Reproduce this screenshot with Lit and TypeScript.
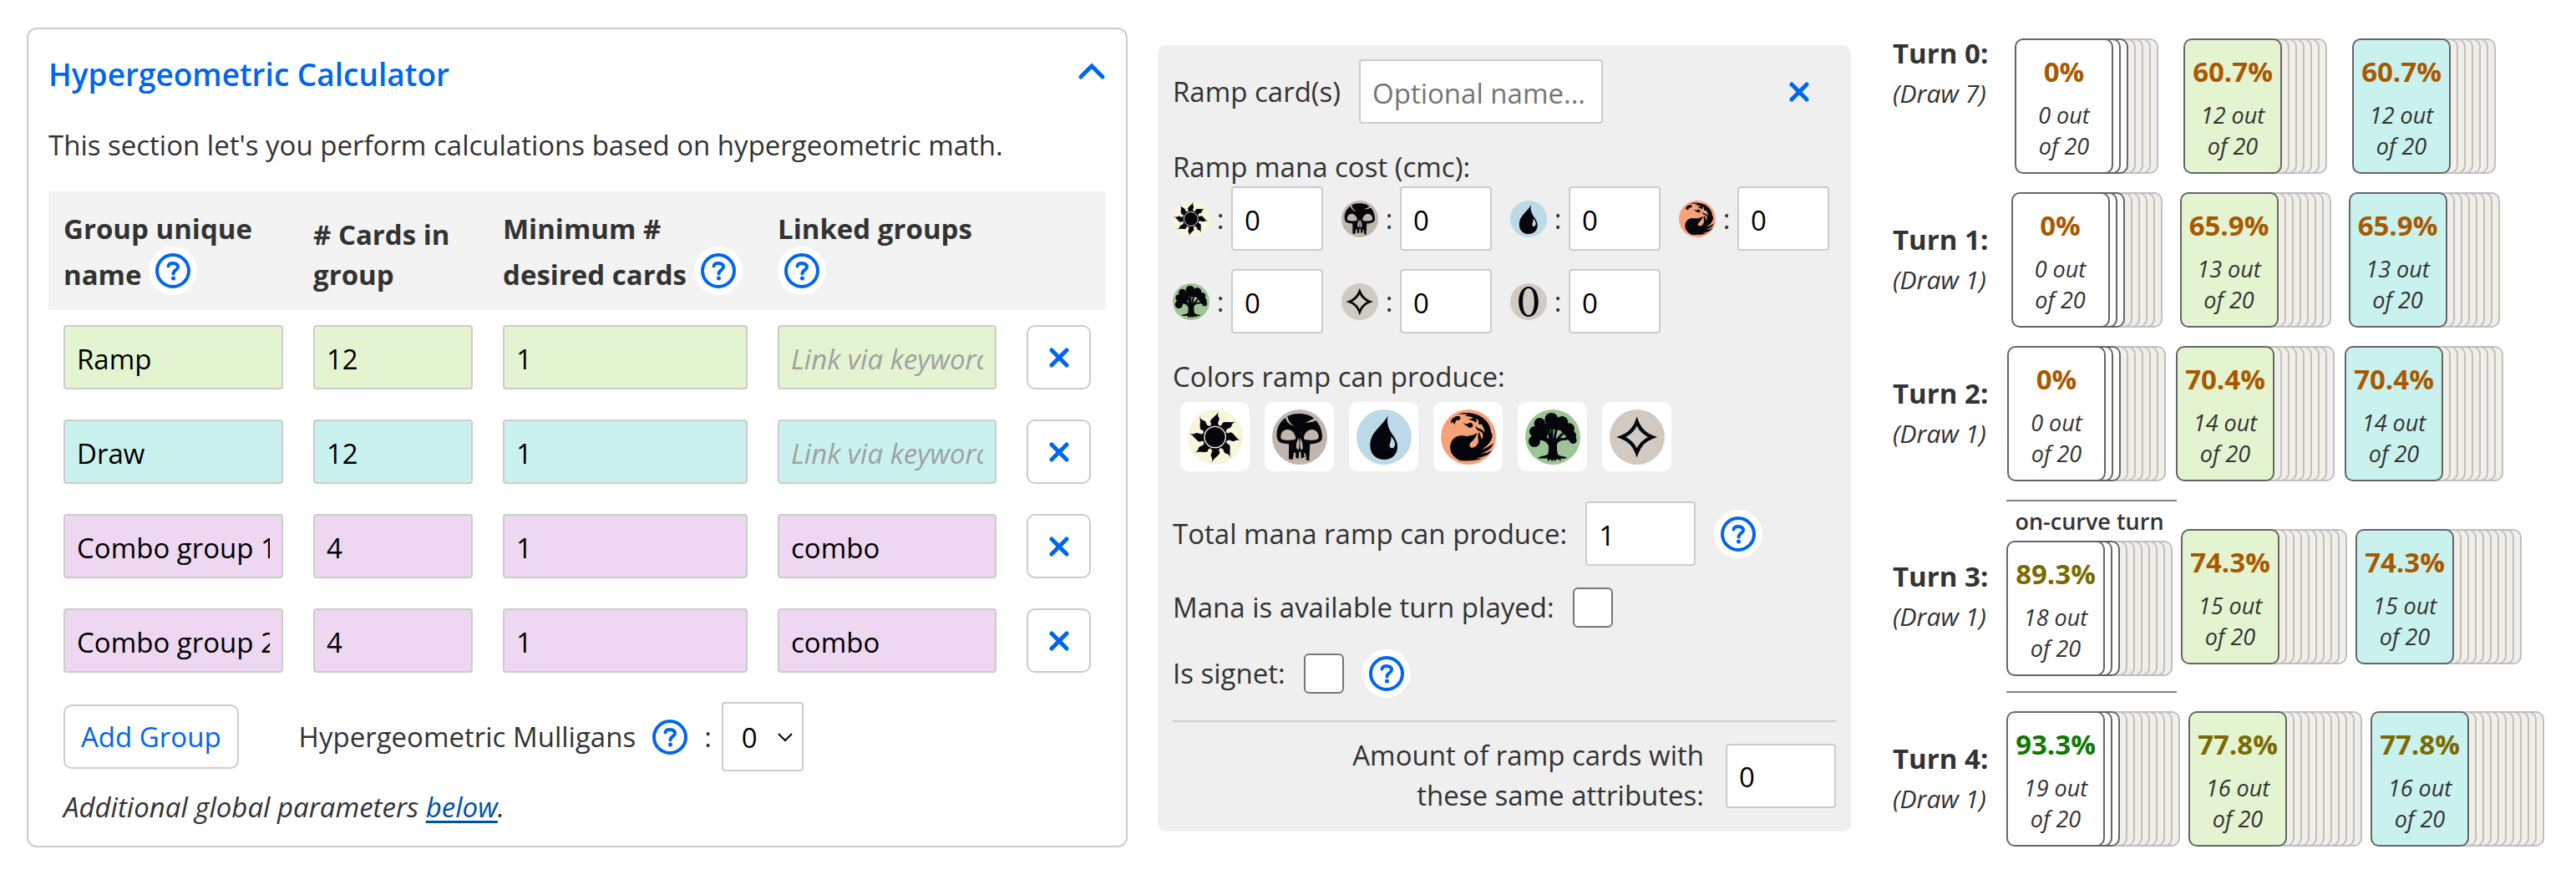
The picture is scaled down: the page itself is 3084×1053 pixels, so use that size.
import { LitElement, css, html, svg } from "lit";
import { customElement, property } from "lit/decorators.js";
import { classMap } from "lit/directives/class-map.js";

const base = css`
  * {
    box-sizing: border-box;
  }
  :host {
    display: block;
    font-family: "Open Sans", "Noto Sans", sans-serif;
    font-size: 33px;
    line-height: 48px;
    color: #333;
  }
  p,
  h2 {
    margin: 0;
  }
  svg {
    display: block;
  }
  button {
    font: inherit;
    color: #0066ee;
    cursor: pointer;
  }
  .field {
    width: 100%;
    height: 77px;
    padding: 3px 14px 0;
    font: inherit;
    color: #000;
    background: #fff;
    border: 2px solid #ccc;
    border-radius: 4px;
    appearance: textfield;
  }
  .field::-webkit-inner-spin-button {
    display: none;
  }
  .cross {
    width: 24px;
    height: 24px;
  }
`;

const cross = html`<svg class="cross" viewBox="0 0 24 24" aria-hidden="true">
  <path d="M3 3 21 21M21 3 3 21" fill="none" stroke="#0066ee" stroke-width="5" stroke-linecap="round" />
</svg>`;

type Mana = "white" | "black" | "blue" | "red" | "green" | "colorless" | "generic";

const manaTint: Record<Mana, string> = {
  white: "#f7f5da",
  black: "#c1b6ae",
  blue: "#bcd9e7",
  red: "#f7a179",
  green: "#9dc496",
  colorless: "#d1cac3",
  generic: "#d1cac3",
};

const ray = "M-18-38C-14-44-12-48-17-54C-18-66 6-74 14-95C9-84 9-76 14-70C18-60 8-54 11-47L17-38Z";

const manaArt: Record<Mana, unknown> = {
  white: svg`
    <g transform="translate(98 99)">
      ${[0, 45, 90, 135, 180, 225, 270, 315].map((a) => svg`<path transform="rotate(${a})" d=${ray} />`)}
      <circle r="42" />
      <circle r="38" fill="none" stroke="#f7f5da" stroke-width="4" />
    </g>`,
  black: svg`
    <path d="M96 15C122 15 140 22 150 32C168 48 176 66 178 84C182 100 180 112 170 116C160 122 146 124 136 124L133 183L123 182L120 158L114 156L116 170L104 176L103 152L97 152L95 176L85 174L84 154L78 156L74 180L60 178V124C46 122 34 122 26 116C16 108 16 96 17 80C20 60 30 42 48 30C60 20 76 15 96 15Z" />
    <g fill="#c1b6ae">
      <path d="M31 96C32 80 44 72 56 72C70 72 80 84 84 98C86 106 82 108 76 109C62 111 46 110 36 107C31 105 30 101 31 96Z" />
      <path d="M167 96C166 80 154 72 142 72C128 72 118 84 114 98C112 106 116 108 122 109C136 111 152 110 162 107C167 105 168 101 167 96Z" />
      <path d="M95 102C88 114 85 128 87 139L94 145L97 137L98 118ZM101 102C108 114 111 128 110 141L103 145L101 137L100 118Z" />
      <path d="M48 26C50 44 62 54 80 60C68 52 58 42 56 26Z" />
      <path d="M158 30C146 34 134 40 120 47C134 46 148 44 160 38Z" />
    </g>`,
  blue: svg`
    <path d="M113 22C108 42 112 62 124 82C136 100 147 112 147 134C147 162 126 180 98 180C70 180 49 160 49 130C49 100 62 84 78 66C92 50 104 40 113 22Z" />
    <path fill="#bcd9e7" d="M124 97C132 106 138 114 138 124C138 133 134 139 128 139C121 139 118 133 119 127C121 118 126 110 124 97Z" />`,
  red: svg`
    <path d="M60 17C76 10 106 10 126 17C150 24 168 42 176 62C180 74 178 80 184 88C188 106 172 128 148 143C166 138 178 130 188 121C184 140 166 152 142 158C158 158 172 154 184 146C172 164 152 172 128 174C136 176 142 176 148 175C132 184 92 186 68 183C46 172 33 156 33 136C34 112 50 94 74 94C84 94 92 98 104 94C116 92 124 88 130 83C128 98 118 108 108 118C100 126 102 138 114 137C128 134 138 122 134 104C132 96 134 86 138 80C140 90 146 98 147 108C154 96 152 84 142 78C132 76 124 70 125 58C128 64 132 68 140 70C148 72 154 76 156 84C160 72 150 62 146 52C142 56 136 54 134 48C140 42 132 34 124 34C130 40 130 46 124 46C116 38 104 40 100 34C106 34 112 34 116 30C104 24 92 26 86 22C94 20 98 18 104 19C88 15 74 17 60 17Z" />
    <path d="M35 50C36 34 46 26 58 24C66 22 72 26 70 34C68 40 58 38 54 40C52 46 50 50 49 54C46 50 44 48 44 44C40 46 38 48 35 50Z" />
    <path d="M80 47C88 52 96 54 102 48C110 46 116 52 115 60C110 68 98 66 96 60C90 58 84 54 80 47Z" />`,
  green: svg`
    <circle cx="94" cy="36" r="24" /><circle cx="52" cy="50" r="20" /><circle cx="132" cy="46" r="22" />
    <circle cx="158" cy="68" r="19" /><circle cx="34" cy="79" r="19" /><circle cx="33" cy="114" r="21" />
    <circle cx="164" cy="94" r="19" /><circle cx="172" cy="110" r="13" /><circle cx="60" cy="84" r="22" />
    <path d="M44 50H146L164 90L140 92L126 74H114L96 70L78 74L64 94L40 100Z" />
    <path d="M96 60V110M84 70 90 110M112 70 104 112M60 88 88 116M134 86 108 116M48 106Q76 102 88 128M150 106Q118 102 108 126" fill="none" stroke="#04060c" stroke-width="9" />
    <path d="M82 104H116C114 128 112 148 118 162C126 168 140 168 150 172C144 178 134 176 126 176L130 184L114 178L106 186L102 178L96 188L92 178L82 186L80 176C68 174 56 178 46 174C56 166 74 168 82 160C86 140 84 122 82 104Z" />`,
  colorless: svg`
    <path d="M98 44Q113 84 153 99Q113 114 98 154Q83 114 43 99Q83 84 98 44Z" fill="none" stroke="#04060c" stroke-width="13" stroke-miterlimit="6" />`,
  generic: svg`
    <path fill-rule="evenodd" d="M99 18C132 18 152 54 152 99S132 180 99 180S46 144 46 99S66 18 99 18ZM99 27C78 27 68 60 68 99S78 171 99 171S130 138 130 99S120 27 99 27Z" />`,
};

@customElement("mana-symbol")
export class ManaSymbol extends LitElement {
  static styles = css`
    :host {
      display: block;
      flex: none;
    }
    .art {
      display: block;
      width: 100%;
      height: 100%;
    }
  `;

  @property() kind: Mana = "white";

  render() {
    return html`<svg class="art" viewBox="0 0 198 198" fill="#04060c" role="img" aria-label=${this.kind}>
      <circle cx="99" cy="99" r="99" fill=${manaTint[this.kind]} />
      ${manaArt[this.kind]}
    </svg>`;
  }
}

@customElement("help-button")
export class HelpButton extends LitElement {
  static styles = css`
    :host {
      display: inline-block;
      vertical-align: -12px;
      flex: none;
      height: 58px;
    }
    .help {
      display: block;
      width: 58px;
      height: 58px;
      padding: 8px;
      border: 0;
      border-radius: 50%;
      background: #fff;
      cursor: pointer;
    }
    .mark {
      display: block;
      width: 42px;
      height: 42px;
    }
  `;

  render() {
    return html`<button class="help" type="button" aria-label="Help">
      <svg class="mark" viewBox="0 0 42 42" fill="none" stroke="#0066ee" aria-hidden="true">
        <circle cx="21" cy="21" r="19" stroke-width="4" />
        <path d="M15.500 15.500C16 12.500 18.500 12 21 12C24.500 12 27 13.500 27 16.500C27 20 21.500 20.500 21.500 24.500" stroke-width="4" stroke-linecap="round" />
        <circle cx="21.500" cy="30" r="2.500" fill="#0066ee" stroke="none" />
      </svg>
    </button>`;
  }
}

interface Group {
  name: string;
  cards: number;
  minimum: number;
  link: string;
  tone: "ramp" | "draw" | "combo";
}

const groups: Group[] = [
  { name: "Ramp", cards: 12, minimum: 1, link: "", tone: "ramp" },
  { name: "Draw", cards: 12, minimum: 1, link: "", tone: "draw" },
  { name: "Combo group 1", cards: 4, minimum: 1, link: "combo", tone: "combo" },
  { name: "Combo group 2", cards: 4, minimum: 1, link: "combo", tone: "combo" },
];

@customElement("group-calculator")
export class GroupCalculator extends LitElement {
  static styles = [
    base,
    css`
      .panel {
        padding: 27px 24px 22px;
        border: 2px solid #ccc;
        border-radius: 12px;
      }
      .head {
        display: flex;
        align-items: center;
        justify-content: space-between;
      }
      .title {
        font-size: 37px;
        line-height: 54px;
        font-weight: 600;
        color: #0066ee;
      }
      .toggle {
        padding: 0;
        border: 0;
        background: none;
      }
      .chevron {
        width: 34px;
        height: 34px;
      }
      .intro {
        margin: 34px 0 31px;
      }
      .groups {
        width: 100%;
        table-layout: fixed;
        border-collapse: collapse;
      }
      .col-name {
        width: 299px;
      }
      .col-cards {
        width: 227px;
      }
      .col-min {
        width: 329px;
      }
      .col-link {
        width: 298px;
      }
      .col-remove {
        width: 113px;
      }
      .groups th,
      .groups td {
        padding: 18px;
        text-align: left;
        vertical-align: bottom;
      }
      .groups th {
        padding-top: 21px;
        font-weight: 700;
        background: #f3f3f3;
      }
      .groups help-button {
        margin-top: -3px;
      }
      .groups .field,
      .groups .remove {
        display: block;
      }
      .ramp {
        background: #e5f4d0;
      }
      .draw {
        background: #c9f2ee;
      }
      .combo {
        background: #eed7f0;
      }
      .link::placeholder {
        font-style: italic;
        color: #a0a0a0;
      }
      .remove,
      .add {
        height: 77px;
        border: 2px solid #ccc;
        border-radius: 10px;
        background: #fff;
      }
      .remove {
        width: 100%;
        padding: 0;
      }
      .remove .cross {
        margin: 0 auto;
      }
      .add {
        padding: 0 19px;
      }
      .options {
        display: flex;
        align-items: center;
        margin: 17px 18px 19px;
        gap: 72px;
      }
      .mulligans {
        display: flex;
        align-items: center;
        gap: 12px;
      }
      .picker {
        display: grid;
        align-items: center;
      }
      .select {
        grid-area: 1 / 1;
        width: 98px;
        height: 83px;
        padding: 2px 22px 0;
        font: inherit;
        color: #000;
        background: #fff;
        border: 2px solid #ccc;
        border-radius: 4px;
        appearance: none;
      }
      .arrow {
        grid-area: 1 / 1;
        justify-self: end;
        width: 20px;
        height: 14px;
        margin-right: 12px;
        pointer-events: none;
      }
      .note {
        margin: 0 18px;
        font-style: italic;
      }
      .note a {
        color: #0050a8;
        text-underline-offset: 4px;
      }
    `,
  ];

  render() {
    return html`<section class="panel">
      <header class="head">
        <h2 class="title">Hypergeometric Calculator</h2>
        <button class="toggle" type="button" aria-label="Collapse section">
          <svg class="chevron" viewBox="0 0 34 34" aria-hidden="true">
            <path d="M4 20 17 7 30 20" fill="none" stroke="#0066ee" stroke-width="5" stroke-linecap="round" />
          </svg>
        </button>
      </header>
      <p class="intro">This section let's you perform calculations based on hypergeometric math.</p>
      <table class="groups">
        <colgroup>
          <col class="col-name" />
          <col class="col-cards" />
          <col class="col-min" />
          <col class="col-link" />
          <col class="col-remove" />
        </colgroup>
        <thead>
          <tr>
            <th scope="col">Group unique name <help-button></help-button></th>
            <th scope="col"># Cards in group</th>
            <th scope="col">Minimum # desired cards <help-button></help-button></th>
            <th scope="col">Linked groups <help-button></help-button></th>
            <th></th>
          </tr>
        </thead>
        <tbody>
          ${groups.map(
            (g) => html`<tr>
              <td><input class="field ${g.tone}" type="text" aria-label="Group name" .value=${g.name} /></td>
              <td><input class="field ${g.tone}" type="number" aria-label="Cards in group" .value=${String(g.cards)} /></td>
              <td><input class="field ${g.tone}" type="number" aria-label="Minimum desired cards" .value=${String(g.minimum)} /></td>
              <td>
                <input class="field link ${g.tone}" type="text" aria-label="Linked groups" placeholder="Link via keyword" .value=${g.link} />
              </td>
              <td><button class="remove" type="button" aria-label="Remove group">${cross}</button></td>
            </tr>`,
          )}
        </tbody>
      </table>
      <div class="options">
        <button class="add" type="button">Add Group</button>
        <div class="mulligans">
          <label for="mulligans">Hypergeometric Mulligans</label>
          <help-button></help-button>
          <span>:</span>
          <div class="picker">
            <select class="select" id="mulligans">
              <option>0</option>
              <option>1</option>
              <option>2</option>
            </select>
            <svg class="arrow" viewBox="0 0 20 14" aria-hidden="true">
              <path d="M2 3 10 11 18 3" fill="none" stroke="#000" stroke-width="2" />
            </svg>
          </div>
        </div>
      </div>
      <p class="note">Additional global parameters <a href="#below">below</a>.</p>
    </section>`;
  }
}

const costKinds: Mana[] = ["white", "black", "blue", "red", "green", "colorless", "generic"];
const produceKinds: Mana[] = ["white", "black", "blue", "red", "green", "colorless"];

@customElement("ramp-editor")
export class RampEditor extends LitElement {
  static styles = [
    base,
    css`
      .panel {
        padding: 17px 18px 19px;
        line-height: 46px;
        background: #efefef;
        border-radius: 10px;
      }
      .line {
        display: flex;
        align-items: center;
        gap: 22px;
      }
      .name {
        width: 292px;
      }
      .name::placeholder {
        color: #757575;
      }
      .close {
        display: grid;
        place-items: center;
        width: 88px;
        height: 77px;
        margin-left: auto;
        border: 0;
        background: none;
      }
      .heading {
        margin-top: 29px;
      }
      .costs {
        display: grid;
        grid-template-columns: repeat(auto-fill, 180px);
        gap: 22px;
      }
      .cost {
        display: grid;
        grid-template-columns: 44px 26px 110px;
        align-items: center;
        text-align: center;
      }
      .cost mana-symbol {
        width: 44px;
        height: 44px;
      }
      .colors {
        display: flex;
        gap: 18px;
        margin: 7px 9px 36px;
      }
      .tile {
        display: grid;
        place-items: center;
        width: 83px;
        height: 83px;
        padding: 0;
        border: 0;
        border-radius: 10px;
        background: #fff;
      }
      .tile mana-symbol {
        width: 66px;
        height: 66px;
      }
      .amount {
        width: 132px;
        flex: none;
      }
      .available {
        margin: 26px 0;
      }
      .box {
        width: 48px;
        height: 48px;
        margin: 0;
        border: 2px solid #767676;
        border-radius: 6px;
        background: #fff;
        appearance: none;
      }
      .copies {
        justify-content: flex-end;
        gap: 26px;
        margin-top: 27px;
        padding-top: 16px;
        border-top: 2px solid #ccc;
      }
      .copies-label {
        max-width: 460px;
        line-height: 48px;
        text-align: right;
      }
    `,
  ];

  render() {
    return html`<section class="panel">
      <div class="line">
        <label for="name">Ramp card(s)</label>
        <input class="field name" id="name" type="text" placeholder="Optional name..." />
        <button class="close" type="button" aria-label="Remove ramp card">${cross}</button>
      </div>
      <p class="heading">Ramp mana cost (cmc):</p>
      <div class="costs">
        ${costKinds.map(
          (k) => html`<label class="cost">
            <mana-symbol .kind=${k}></mana-symbol><span>:</span>
            <input class="field" type="number" aria-label="${k} mana" value="0" />
          </label>`,
        )}
      </div>
      <p class="heading">Colors ramp can produce:</p>
      <div class="colors">
        ${produceKinds.map(
          (k) => html`<button class="tile" type="button" aria-pressed="false" aria-label=${k}>
            <mana-symbol .kind=${k}></mana-symbol>
          </button>`,
        )}
      </div>
      <div class="line">
        <label for="total">Total mana ramp can produce:</label>
        <input class="field amount" id="total" type="number" value="1" />
        <help-button></help-button>
      </div>
      <div class="line available">
        <label for="available">Mana is available turn played:</label>
        <input class="box" id="available" type="checkbox" />
      </div>
      <div class="line">
        <label for="signet">Is signet:</label>
        <input class="box" id="signet" type="checkbox" />
        <help-button></help-button>
      </div>
      <div class="line copies">
        <label class="copies-label" for="copies">Amount of ramp cards with these same attributes:</label>
        <input class="field amount" id="copies" type="number" value="0" />
      </div>
    </section>`;
  }
}

type Rating = "low" | "fair" | "good";

interface Stack {
  chance: string;
  hits: string;
  rating: Rating;
  tone: "combo" | "ramp" | "draw";
  needed: number;
  onCurve?: boolean;
}

interface Turn {
  number: number;
  drawn: number;
  stacks: Stack[];
}

type Odds = [chance: string, hits: number, rating: Rating];

const turn = (number: number, combo: Odds, other: Odds): Turn => {
  const stack = ([chance, hits, rating]: Odds) => ({ chance, rating, hits: `${hits} out of 20` });
  return {
    number,
    drawn: number === 0 ? 7 : 1,
    stacks: [
      { ...stack(combo), tone: "combo", needed: 3, onCurve: number === 3 },
      { ...stack(other), tone: "ramp", needed: 1 },
      { ...stack(other), tone: "draw", needed: 1 },
    ],
  };
};

const turns: Turn[] = [
  turn(0, ["0%", 0, "low"], ["60.7%", 12, "low"]),
  turn(1, ["0%", 0, "low"], ["65.9%", 13, "low"]),
  turn(2, ["0%", 0, "low"], ["70.4%", 14, "low"]),
  turn(3, ["89.3%", 18, "fair"], ["74.3%", 15, "low"]),
  turn(4, ["93.3%", 19, "good"], ["77.8%", 16, "fair"]),
];

@customElement("turn-odds")
export class TurnOdds extends LitElement {
  static styles = [
    base,
    css`
      .turns {
        display: flex;
        flex-direction: column;
        gap: 22px;
        padding-left: 14px;
      }
      .turn {
        display: flex;
        align-items: center;
      }
      .opening {
        min-height: 168px;
        align-items: flex-start;
      }
      .opening .cell {
        align-self: flex-end;
      }
      .label {
        flex: none;
        width: 131px;
        white-space: nowrap;
      }
      .number {
        font-weight: 700;
      }
      .drawn {
        font-size: 30px;
        font-style: italic;
      }
      .cell {
        display: flex;
        justify-content: center;
        min-width: 202px;
        padding: 0 5px;
      }
      .curve-cell {
        padding-right: 0;
      }
      .curve {
        padding: 5px 5px 18px 0;
        border: 2px solid #808080;
        border-width: 2px 0;
      }
      .curve-label {
        margin-bottom: 5px;
        font-size: 27px;
        line-height: 37px;
        font-weight: 600;
        text-align: center;
      }
      .stack {
        display: flex;
        isolation: isolate;
      }
      .card {
        position: relative;
        z-index: 20;
        width: 118px;
        height: 162px;
        padding-top: 14px;
        border: 2px solid #666;
        border-radius: 10px;
        text-align: center;
      }
      .card.combo {
        background: #fff;
      }
      .card.ramp {
        background: #e5f4d0;
      }
      .card.draw {
        background: #c9f2ee;
      }
      .edge {
        width: 29px;
        height: 162px;
        margin-left: -20px;
        border: 2px solid #c0c0c0;
        border-left: 0;
        border-radius: 0 10px 10px 0;
        background: #f1efe8;
      }
      .edge.needed {
        border-color: #666;
        background: #fff;
      }
      .chance {
        font-weight: 700;
      }
      .low {
        color: #a85900;
      }
      .fair {
        color: #7a6a00;
      }
      .good {
        color: #0d7a00;
      }
      .hits {
        margin-top: 9px;
        padding: 0 15px;
        font-size: 27px;
        line-height: 37px;
        font-style: italic;
      }
    `,
  ];

  private stack(s: Stack, size: number) {
    const edges = Array.from({ length: size - 1 }, (_, i) => i);
    return html`<div class="stack">
      <div class="card ${s.tone}">
        <p class="chance ${s.rating}">${s.chance}</p>
        <p class="hits">${s.hits}</p>
      </div>
      ${edges.map(
        (i) => html`<span class=${classMap({ edge: true, needed: i < s.needed - 1 })} style="z-index:${size - i}"></span>`,
      )}
    </div>`;
  }

  render() {
    return html`<section class="turns">
      ${turns.map(
        (t) => html`<div class=${classMap({ turn: true, opening: t.number === 0 })}>
          <div class="label">
            <p class="number">Turn ${t.number}:</p>
            <p class="drawn">(Draw ${t.drawn})</p>
          </div>
          ${t.stacks.map((s) =>
            s.onCurve
              ? html`<div class="cell curve-cell">
                  <div class="curve">
                    <p class="curve-label">on-curve turn</p>
                    ${this.stack(s, 7 + t.number)}
                  </div>
                </div>`
              : html`<div class="cell">${this.stack(s, 7 + t.number)}</div>`,
          )}
        </div>`,
      )}
    </section>`;
  }
}

@customElement("app-root")
export class AppRoot extends LitElement {
  static styles = css`
    :host {
      display: block;
      background: #fff;
    }
    .page {
      display: grid;
      grid-template-columns: 1318fr 830fr 832fr;
      column-gap: 36px;
      align-items: start;
      padding: 33px 0 39px 32px;
    }
    .ramp {
      margin-top: 21px;
    }
    .odds {
      margin-top: 7px;
    }
  `;

  render() {
    return html`<main class="page">
      <group-calculator></group-calculator>
      <ramp-editor class="ramp"></ramp-editor>
      <turn-odds class="odds"></turn-odds>
    </main>`;
  }
}
